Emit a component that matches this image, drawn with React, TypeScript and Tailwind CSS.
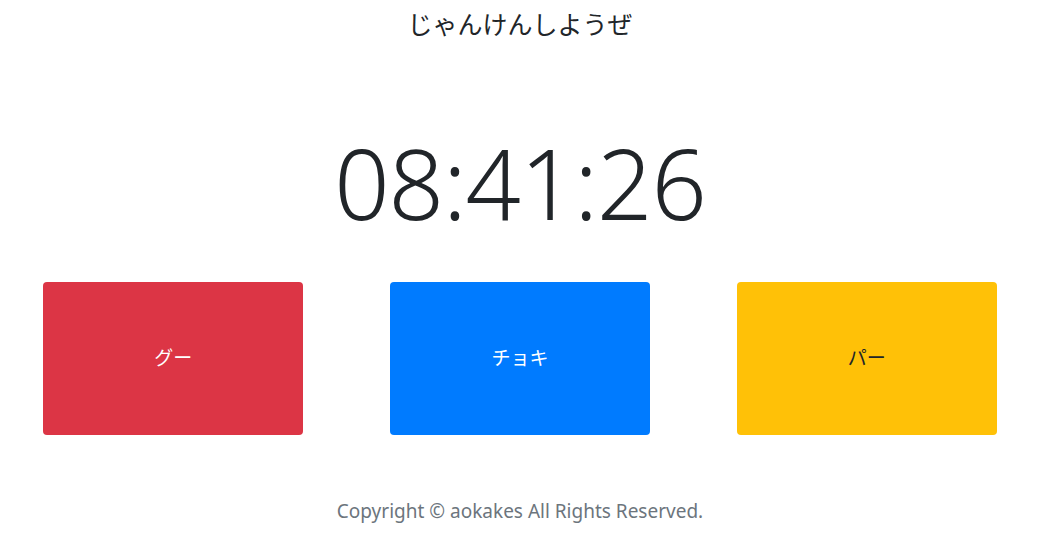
const hands = [
  { label: 'グー', cls: 'bg-[#dc3545] text-white' },
  { label: 'チョキ', cls: 'bg-[#007bff] text-white' },
  { label: 'パー', cls: 'bg-[#ffc107] text-[#212529]' },
]

export default function App() {
  return (
    <div
      className="w-[1040px] h-[556px] bg-white text-[#212529] flex flex-col items-center"
      style={{ fontFamily: '"Noto Sans", "Noto Sans CJK JP", sans-serif' }}
    >
      {/* Heading */}
      <h1 className="h-[48px] flex items-center text-[25px] font-normal leading-none">じゃんけんしようぜ</h1>

      {/* Clock */}
      <div className="mt-[72px] h-[124px] flex items-center text-[97px] font-light leading-none tracking-[-1px]">
        08:41:26
      </div>

      {/* Hand buttons */}
      <div className="mt-[38px] w-full flex justify-around">
        {hands.map(h => (
          <button
            key={h.label}
            className={`w-[260px] h-[153px] rounded flex items-center justify-center text-[19px] ${h.cls}`}
          >
            {h.label}
          </button>
        ))}
      </div>

      {/* Footer */}
      <footer className="mt-[67px] text-[19px] text-[#6c757d] leading-none">
        Copyright © aokakes All Rights Reserved.
      </footer>
    </div>
  )
}
